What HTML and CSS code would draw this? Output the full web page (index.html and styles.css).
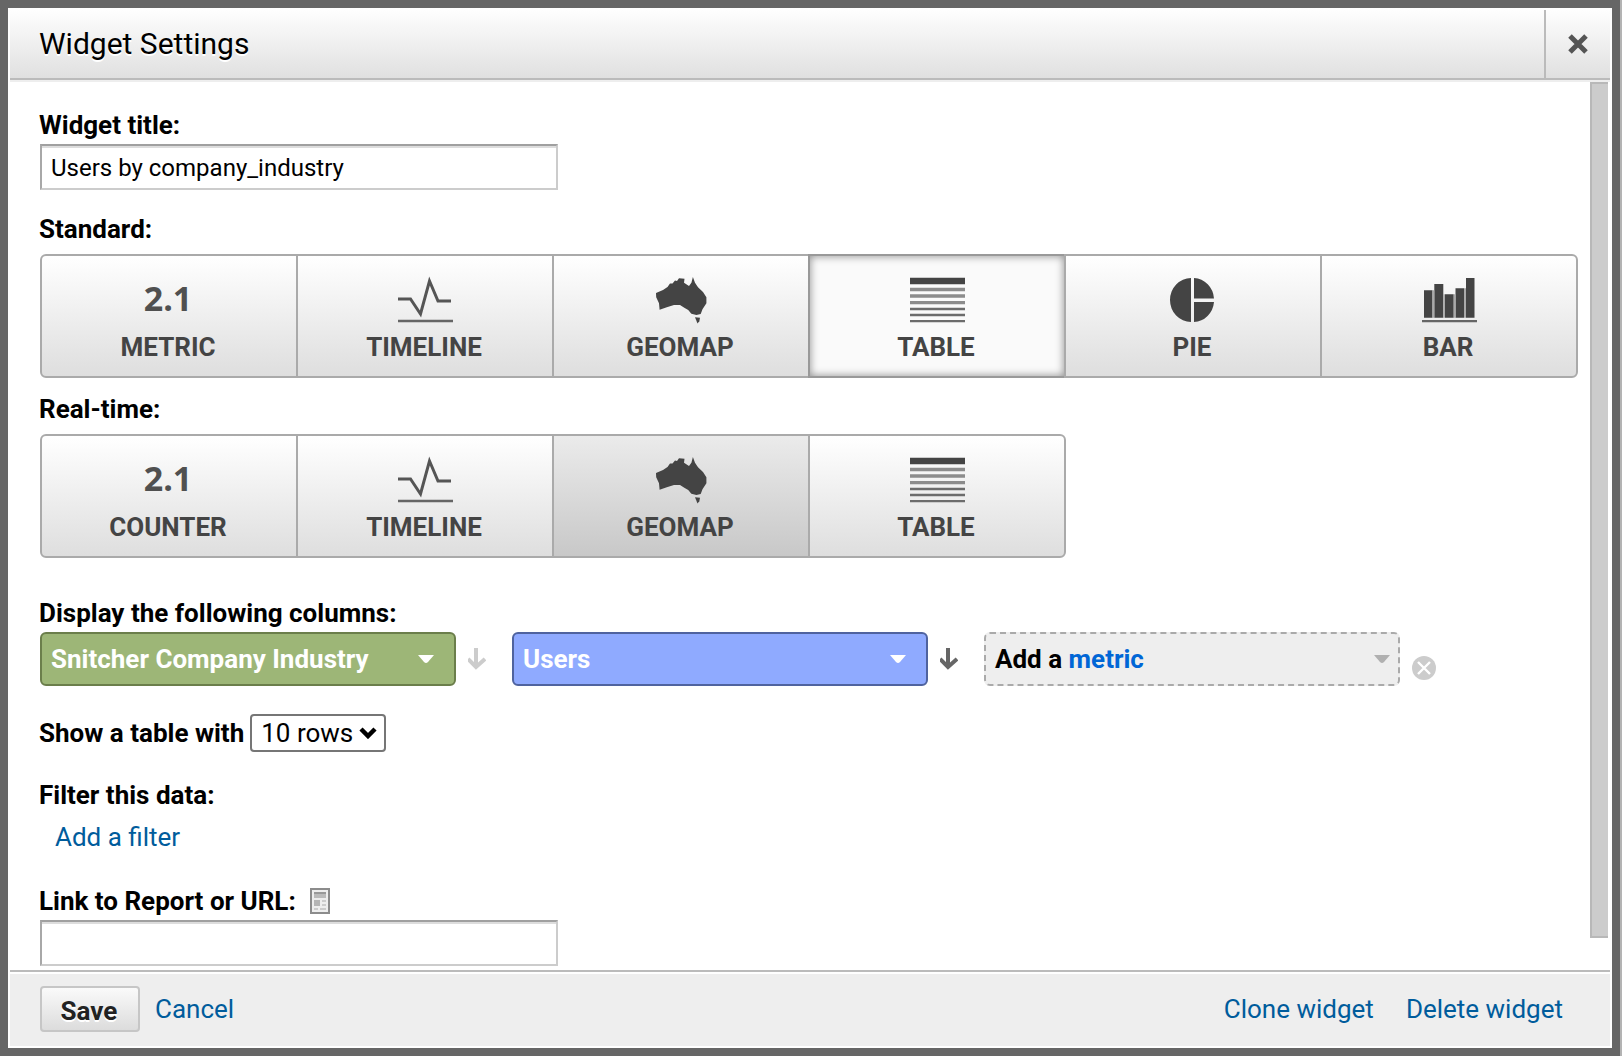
FILE: index.html
```html
<!DOCTYPE html>
<html lang="en">
<head>
    <meta charset="UTF-8">
    <meta name="viewport" content="width=device-width, initial-scale=1.0">
    <title>Widget Settings</title>
    <link rel="stylesheet" href="styles.css">
</head>
<body>

    <!-- shared icons -->
    <svg class="sprite" aria-hidden="true">
        <symbol id="icon-timeline" viewBox="0 0 56 48">
            <path d="M1 23H13.500L23.500 38L32.500 5L41 25H54" fill="none" stroke="#555" stroke-width="3"/>
            <path d="M1 45H56" stroke="#666" stroke-width="2.400"/>
        </symbol>
        <symbol id="icon-geomap" viewBox="0 0 56 48">
            <path fill="#444" d="M3 17L10 14L14.500 11L17 7.500L19.500 7.500L22 4.500L24 5L26 2.300L31.500 2.700L31 6.700L36 10L38.400 6.700L39.900 1L42 6.700L45 11.300L50 16L53.400 21.300V27.300L49.500 33.300L47.700 38L43.400 39L38.400 37.700L35.200 34L31.300 31.700L27 29L21 29L13.800 31.300L6.600 33.700L6 27.300L3.200 21.300Z"/>
            <path fill="#444" d="M42 41.300L47 41.700L46.300 45.300L44.500 47.500Z"/>
        </symbol>
        <symbol id="icon-table" viewBox="0 0 56 48">
            <path fill="#444" d="M1 1.700H56V8.300H1Z"/>
            <path fill="#8c8c8c" d="M1 11.700H56V15.300H1ZM1 18.300H56V21.700H1ZM1 25H56V28.300H1Z"/>
            <path fill="#6c6c6c" d="M1 31.700H56V34.300H1ZM1 37.700H56V40.300H1ZM1 44H56V46.300H1Z"/>
        </symbol>
        <symbol id="icon-pie" viewBox="0 0 56 48">
            <path fill="#444" d="M26 2A21 22 0 0 0 26 46ZM29 2A21 22 0 0 1 49 22.500H29ZM49 26A21 22 0 0 1 29 46V26Z"/>
        </symbol>
        <symbol id="icon-bar" viewBox="0 0 56 48">
            <path fill="#444" d="M3 14.300H11.500V41.700H3ZM13.300 8H22.300V41.700H13.300ZM24 18.300H32.700V41.700H24ZM34.500 12.300H43V41.700H34.500ZM45 2H53.500V41.700H45Z"/>
            <path fill="#aaa" d="M11.500 14.300H13.300V41.700H11.500ZM22.300 18.300H24V41.700H22.300ZM32.700 18.300H34.500V41.700H32.700ZM43 12.300H45V41.700H43Z"/>
            <path fill="#666" d="M1 44H56V46.300H1Z"/>
        </symbol>
        <symbol id="icon-arrow" viewBox="0 0 18 22">
            <path d="M8 0V19M0 11L8 19L17 11" fill="none" stroke="currentColor" stroke-width="4"/>
        </symbol>
        <symbol id="icon-caret" viewBox="0 0 16 8">
            <path d="M0 0H16L10 7Q8 9 6 7Z" fill="currentColor"/>
        </symbol>
    </svg>

    <form class="dialog">
        <div class="dialog-header">
            <h1>Widget Settings</h1>
            <button type="button" class="close-btn" aria-label="Close">
                <svg width="20" height="20" viewBox="0 0 20 20">
                    <path d="M2 2L18 18M18 2L2 18" stroke="#555" stroke-width="5"/>
                </svg>
            </button>
        </div>

        <div class="dialog-body">
            <div class="content">
                <div class="field">
                    <label for="widgetTitle">Widget title:</label>
                    <input type="text" id="widgetTitle" value="Users by company_industry">
                </div>

                <h2 class="group-title">Standard:</h2>
                <div class="type-group">
                    <button type="button" class="type-btn first">
                        <span class="number">2.1</span>
                        METRIC
                    </button>
                    <button type="button" class="type-btn">
                        <svg class="icon"><use href="#icon-timeline"/></svg>
                        TIMELINE
                    </button>
                    <button type="button" class="type-btn">
                        <svg class="icon"><use href="#icon-geomap"/></svg>
                        GEOMAP
                    </button>
                    <button type="button" class="type-btn selected" aria-pressed="true">
                        <svg class="icon"><use href="#icon-table"/></svg>
                        TABLE
                    </button>
                    <button type="button" class="type-btn">
                        <svg class="icon"><use href="#icon-pie"/></svg>
                        PIE
                    </button>
                    <button type="button" class="type-btn last">
                        <svg class="icon"><use href="#icon-bar"/></svg>
                        BAR
                    </button>
                </div>

                <h2 class="group-title realtime">Real-time:</h2>
                <div class="type-group">
                    <button type="button" class="type-btn first">
                        <span class="number">2.1</span>
                        COUNTER
                    </button>
                    <button type="button" class="type-btn">
                        <svg class="icon"><use href="#icon-timeline"/></svg>
                        TIMELINE
                    </button>
                    <button type="button" class="type-btn disabled">
                        <svg class="icon"><use href="#icon-geomap"/></svg>
                        GEOMAP
                    </button>
                    <button type="button" class="type-btn last">
                        <svg class="icon"><use href="#icon-table"/></svg>
                        TABLE
                    </button>
                </div>

                <h2 class="columns-title">Display the following columns:</h2>
                <div class="columns">
                    <div class="column">
                        <button type="button" class="pill dimension">
                            Snitcher Company Industry
                            <svg class="caret"><use href="#icon-caret"/></svg>
                        </button>
                        <button type="button" class="sort-btn" aria-label="Sort by dimension">
                            <svg width="18" height="22"><use href="#icon-arrow"/></svg>
                        </button>
                    </div>
                    <div class="column">
                        <button type="button" class="pill metric">
                            Users
                            <svg class="caret"><use href="#icon-caret"/></svg>
                        </button>
                        <button type="button" class="sort-btn active" aria-label="Sort by metric">
                            <svg width="18" height="22"><use href="#icon-arrow"/></svg>
                        </button>
                    </div>
                    <div class="column">
                        <button type="button" class="pill add-metric">
                            <span>Add a <em>metric</em></span>
                            <svg class="caret"><use href="#icon-caret"/></svg>
                        </button>
                        <button type="button" class="remove-btn" aria-label="Remove">
                            <svg width="24" height="24" viewBox="0 0 24 24">
                                <circle cx="12" cy="12" r="12" fill="#ccc"/>
                                <path d="M6 6L18 18M18 6L6 18" stroke="#fff" stroke-width="2.400"/>
                            </svg>
                        </button>
                    </div>
                </div>

                <div class="rows-line">
                    <label for="rowCount">Show a table with</label>
                    <span class="select-wrap">
                        <select id="rowCount">
                            <option>5 rows</option>
                            <option selected>10 rows</option>
                        </select>
                        <svg class="chevron" viewBox="0 0 18 12">
                            <path d="M2 2L9 9L16 2" fill="none" stroke="#000" stroke-width="4.500"/>
                        </svg>
                    </span>
                </div>

                <h2>Filter this data:</h2>
                <a href="#" class="add-filter">Add a filter</a>

                <div class="field">
                    <div class="label-row">
                        <label for="reportUrl">Link to Report or URL:</label>
                        <svg width="20" height="26" viewBox="0 0 20 26">
                            <rect x="1" y="1" width="18" height="24" fill="#eee" stroke="#8c8c8c" stroke-width="2"/>
                            <path d="M4 4H16V6H4Z" fill="#999"/>
                            <path d="M4 6H16V10H4Z" fill="#bbb"/>
                            <path d="M4 12H10V18H4Z" fill="#b5b5b5"/>
                            <path d="M12 12H16V14H12ZM12 16H16V18H12ZM4 20H8V22H4ZM10 20H16V22H10Z" fill="#ccc"/>
                        </svg>
                    </div>
                    <input type="text" id="reportUrl">
                </div>
            </div>
            <div class="scroll-thumb"></div>
        </div>

        <div class="dialog-footer">
            <button type="submit" class="save-btn">Save</button>
            <a href="#">Cancel</a>
            <div class="footer-links">
                <a href="#">Clone widget</a>
                <a href="#">Delete widget</a>
            </div>
        </div>
    </form>

</body>
</html>
```
FILE: styles.css
```css
* {
    box-sizing: border-box;
}
body {
    margin: 0;
    padding: 8px;
    min-height: 100vh;
    display: flex;
    background-color: #666;
    border-right: 2px solid #b3b3b3;
    font-family: Roboto, Arial, sans-serif;
    font-size: 26px;
    line-height: 30px;
    color: #000;
}
html {
    background-color: #b3b3b3;
}
h1, h2 {
    margin: 0;
    font-size: 26px;
}
label {
    font-weight: bold;
}
a {
    color: #005c9c;
    text-decoration: none;
}
button, input, select {
    font-family: inherit;
    font-size: 26px;
    line-height: 30px;
}
button {
    margin: 0;
    cursor: pointer;
}
.sprite {
    display: none;
}

/* Dialog */
.dialog {
    flex: 1;
    display: flex;
    flex-direction: column;
    background-color: #fff;
    border: 2px solid #fff;
    border-top: none;
}
.dialog-header {
    display: flex;
    align-items: stretch;
    justify-content: space-between;
    height: 72px;
    padding-left: 29px;
    background: linear-gradient(#fff, #e0e0e0);
    border-bottom: 2px solid #bbb;
    box-shadow: 0 2px 0 #eee;
}
.dialog-header h1 {
    align-self: center;
    padding-top: 2px;
    font-size: 30px;
    font-weight: normal;
    text-shadow: 0 2px 0 #fff;
}
.close-btn {
    width: 66px;
    margin-top: 2px;
    padding: 0;
    display: flex;
    align-items: center;
    justify-content: center;
    background: none;
    border: none;
    border-left: 2px solid #bbb;
}
.dialog-body {
    flex: 1;
    display: flex;
    padding: 2px 2px 0 0;
}
.content {
    flex: 1;
    padding: 28px 12px 4px 29px;
}
.scroll-thumb {
    width: 18px;
    margin-bottom: 32px;
    background-color: #ccc;
    border: 2px solid #b8b8b8;
    border-right: none;
}

/* Text fields */
.field {
    display: flex;
    flex-direction: column;
    align-items: flex-start;
    gap: 4px;
}
.field input {
    width: 518px;
    height: 46px;
    margin: 0 0 0 1px;
    padding: 2px 9px 0;
    font-size: 24px;
    border: 2px solid #ccc;
    border-top-color: #a0a0a0;
    border-left-color: #a8a8a8;
    box-shadow: inset 0 2px 0 #ddd;
}
.label-row {
    display: flex;
    align-items: center;
    gap: 14px;
}

/* Widget type buttons */
.group-title {
    margin: 24px 0 10px;
}
.group-title.realtime {
    margin-top: 16px;
}
.type-group {
    display: grid;
    grid-template-columns: repeat(6, 1fr);
    margin-left: 1px;
    padding-right: 2px;
}
.type-btn {
    height: 124px;
    margin-right: -2px;
    padding: 20px 2px 14px 0;
    display: flex;
    flex-direction: column;
    align-items: center;
    gap: 8px;
    font-weight: bold;
    color: #444;
    background: linear-gradient(#fff, #dedede);
    border: 2px solid #aaa;
}
.type-btn.first {
    border-radius: 6px 0 0 6px;
}
.type-btn.last {
    border-radius: 0 6px 6px 0;
}
.type-btn.selected {
    background: #fafafa;
    border-color: #999;
    box-shadow: inset 0 0 8px rgba(0, 0, 0, 0.45);
}
.type-btn.disabled {
    background: linear-gradient(#ebebeb, #c8c8c8);
}
.icon, .number {
    width: 56px;
    height: 48px;
}
.icon {
    margin-left: 2px;
}
.number {
    font-family: "Open Sans", sans-serif;
    font-size: 34px;
    line-height: 44px;
    text-align: center;
    color: #505050;
}

/* Column pickers */
.columns-title {
    margin: 40px 0 4px;
}
.columns {
    display: flex;
    gap: 26px;
    margin-left: 1px;
}
.column {
    display: flex;
    align-items: center;
    gap: 12px;
}
.pill {
    width: 416px;
    height: 54px;
    padding: 0 20px 0 9px;
    display: flex;
    align-items: center;
    justify-content: space-between;
    font-weight: bold;
    color: #fff;
    border: 2px solid;
    border-radius: 6px;
}
.pill.dimension {
    background-color: #9db677;
    border-color: #6b7e4b;
}
.pill.metric {
    background-color: #8faaff;
    border-color: #4f639f;
}
.pill.add-metric {
    padding-right: 8px;
    color: #000;
    background-color: #eee;
    border: 2px dashed #aaa;
}
.pill em {
    font-style: normal;
    color: #0066d6;
}
.caret {
    width: 16px;
    height: 8px;
}
.add-metric .caret {
    color: #b0b0b0;
}
.sort-btn, .remove-btn {
    padding: 0;
    display: flex;
    background: none;
    border: none;
    color: #ccc;
}
.sort-btn.active {
    color: #666;
}
.remove-btn {
    align-self: flex-end;
    margin-bottom: 6px;
}

/* Row count */
.rows-line {
    display: flex;
    align-items: center;
    gap: 6px;
    margin: 28px 0;
}
.select-wrap {
    position: relative;
}
.select-wrap select {
    display: block;
    width: 136px;
    height: 38px;
    padding: 0 0 0 9px;
    appearance: none;
    color: #000;
    background-color: #fff;
    border: 2px solid #767676;
    border-radius: 4px;
}
.chevron {
    position: absolute;
    right: 9px;
    top: 13px;
    width: 18px;
    height: 12px;
    pointer-events: none;
}
.add-filter {
    display: block;
    margin: 12px 0 34px 16px;
}

/* Footer */
.dialog-footer {
    display: flex;
    align-items: center;
    gap: 15px;
    height: 76px;
    padding: 0 47px 0 30px;
    background-color: #eee;
    border-top: 2px solid #bbb;
    box-shadow: inset 0 2px 0 #fff;
}
.save-btn {
    width: 100px;
    height: 46px;
    padding: 4px 2px 0 0;
    font-weight: bold;
    color: #222;
    text-shadow: 0 2px 0 #fff;
    background: linear-gradient(#fafafa, #dcdcdc);
    border: 2px solid #c6c6c6;
    border-radius: 4px;
}
.footer-links {
    display: flex;
    gap: 32px;
    margin-left: auto;
}
```
